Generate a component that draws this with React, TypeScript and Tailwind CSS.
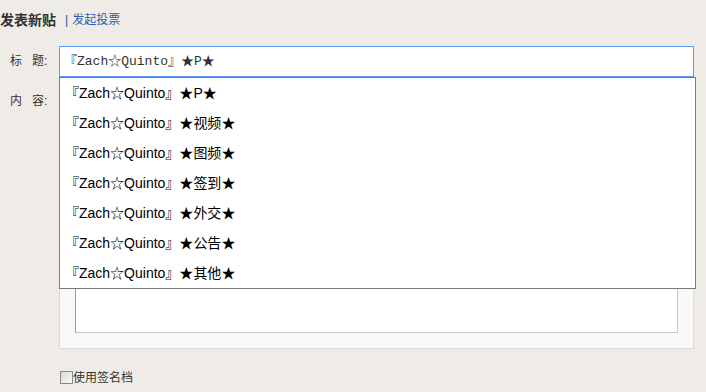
import React from 'react'

const SUGGESTIONS = ['P', '视频', '图频', '签到', '外交', '公告', '其他']

const cjk = "font-['Liberation_Sans','Noto_Sans_CJK_SC',sans-serif]"

export default function App() {
  return (
    <div className={`w-[706px] h-[392px] overflow-hidden bg-[#efece7] text-[#333] ${cjk}`}>
      {/* header */}
      <div className="flex items-center h-[20px] mt-[10px]">
        <span className="text-[14px] font-bold text-[#333] leading-none">发表新贴</span>
        <span className="ml-[9px] text-[12px] text-[#2a4f9a] leading-none">|</span>
        <a className="ml-[4px] text-[12px] text-[#2a5db0] leading-none">发起投票</a>
      </div>

      {/* title */}
      <div className="flex mt-[16px]">
        <label className="w-[59px] pl-[10px] pt-[8px] text-[12px] leading-[14px] text-[#333]">
          标<span className="ml-[10px]">题</span>:
        </label>
        <div className="relative">
          <div className="w-[635px] h-[31px] border border-[#5b9cf6] bg-white flex items-center pl-[4px] text-[13px] text-[#333] font-['Liberation_Mono','Noto_Sans_CJK_SC',monospace]">
            『Zach☆Quinto』★P★
          </div>
          <ul className="absolute left-0 top-[31px] z-10 w-[637px] h-[212px] border border-[#7a7a7a] bg-white">
            {SUGGESTIONS.map(s => (
              <li key={s} className="h-[30px] flex items-center pl-[5px] text-[14px] text-black">
                『Zach☆Quinto』★{s}★
              </li>
            ))}
          </ul>
        </div>
      </div>

      {/* content */}
      <div className="flex mt-[9px]">
        <label className="w-[59px] pl-[10px] pt-[8px] text-[12px] leading-[14px] text-[#333]">
          内<span className="ml-[10px]">容</span>:
        </label>
        <div className="w-[635px] h-[263px] bg-[#f9f9f9] border border-[#dcdcdc] px-[15px] pb-[15px] flex flex-col justify-end">
          <div className="h-[180px] bg-white border-l border-t border-[#999] border-r-[#c8c8c8] border-b-[#c8c8c8] border-r border-b" />
        </div>
      </div>

      {/* signature */}
      <div className="flex items-center mt-[22px] ml-[60px]">
        <span className="w-[13px] h-[13px] border border-[#8a8a8a] bg-gradient-to-br from-[#d8d8d8] to-[#fafafa]" />
        <span className="text-[12px] leading-none text-[#333]">使用签名档</span>
      </div>
    </div>
  )
}
